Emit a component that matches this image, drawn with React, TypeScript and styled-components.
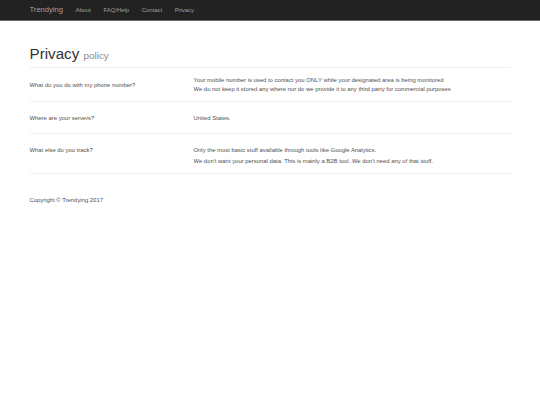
import React from "react";
import styled, { createGlobalStyle } from "styled-components";

const Global = createGlobalStyle`
  html, body { margin: 0; padding: 0; background: #fff; }
  body {
    font-family: "Liberation Sans", Helvetica, Arial, sans-serif;
    font-size: 5.9px;
    line-height: 8.6px;
    color: #505050;
  }
`;

const Navbar = styled.nav`
  height: 20px;
  background: #222;
  border-bottom: 1px solid #6e6e6e;
`;

const NavInner = styled.div`
  width: 481px;
  margin: 0 auto;
  height: 100%;
  display: flex;
  align-items: center;
`;

const Brand = styled.a`
  font-size: 7.6px;
  color: #a0a0a0;
  text-decoration: none;
  margin-right: 12.6px;
`;

const NavLink = styled.a`
  font-size: 5.9px;
  color: #a0a0a0;
  text-decoration: none;
  margin-right: 12.6px;
`;

const Container = styled.main`
  width: 481px;
  margin: 0 auto;
  padding-top: 25px;
`;

const PageHeader = styled.div`
  padding-bottom: 3.8px;
  border-bottom: 1px solid #eee;
`;

const Title = styled.h1`
  margin: 0;
  font-size: 15.2px;
  line-height: 1.1;
  font-weight: 500;
  color: #333;
`;

const Small = styled.small`
  font-size: 65%;
  color: #8a8a8a;
  font-weight: 400;
`;

const Row = styled.section<{ $pt: number; $pb: number; $center?: boolean; $lh?: number }>`
  display: grid;
  grid-template-columns: 164px 1fr;
  align-items: ${(p) => (p.$center ? "center" : "start")};
  padding: ${(p) => p.$pt}px 0 ${(p) => p.$pb}px;
  border-bottom: 1px solid #eee;
  line-height: ${(p) => p.$lh ?? 8.6}px;
`;

const Question = styled.div``;

const Answer = styled.div``;

const Para = styled.p`
  margin: 0;
  & + & { margin-top: 2.4px; }
`;

const Footer = styled.footer`
  margin-top: 21.7px;
`;

export default function App() {
  return (
    <>
      <Global />
      <Navbar>
        <NavInner>
          <Brand href="#">Trendying</Brand>
          <NavLink href="#">About</NavLink>
          <NavLink href="#">FAQ/Help</NavLink>
          <NavLink href="#">Contact</NavLink>
          <NavLink href="#">Privacy</NavLink>
        </NavInner>
      </Navbar>
      <Container>
        <PageHeader>
          <Title>
            Privacy <Small>policy</Small>
          </Title>
        </PageHeader>
        <Row $pt={8.5} $pb={6.5} $center $lh={9}>
          <Question>What do you do with my phone number?</Question>
          <Answer>
            Your mobile number is used to contact you ONLY while your designated area is being monitored
            <br />
            We do not keep it stored any where nor do we provide it to any third party for commercial purposes
          </Answer>
        </Row>
        <Row $pt={12.7} $pb={10.7}>
          <Question>Where are your servers?</Question>
          <Answer>United States.</Answer>
        </Row>
        <Row $pt={11.7} $pb={7.7}>
          <Question>What else do you track?</Question>
          <Answer>
            <Para>Only the most basic stuff available through tools like Google Analytics.</Para>
            <Para>We don't want your personal data. This is mainly a B2B tool. We don't need any of that stuff.</Para>
          </Answer>
        </Row>
        <Footer>Copyright © Trendying 2017</Footer>
      </Container>
    </>
  );
}
